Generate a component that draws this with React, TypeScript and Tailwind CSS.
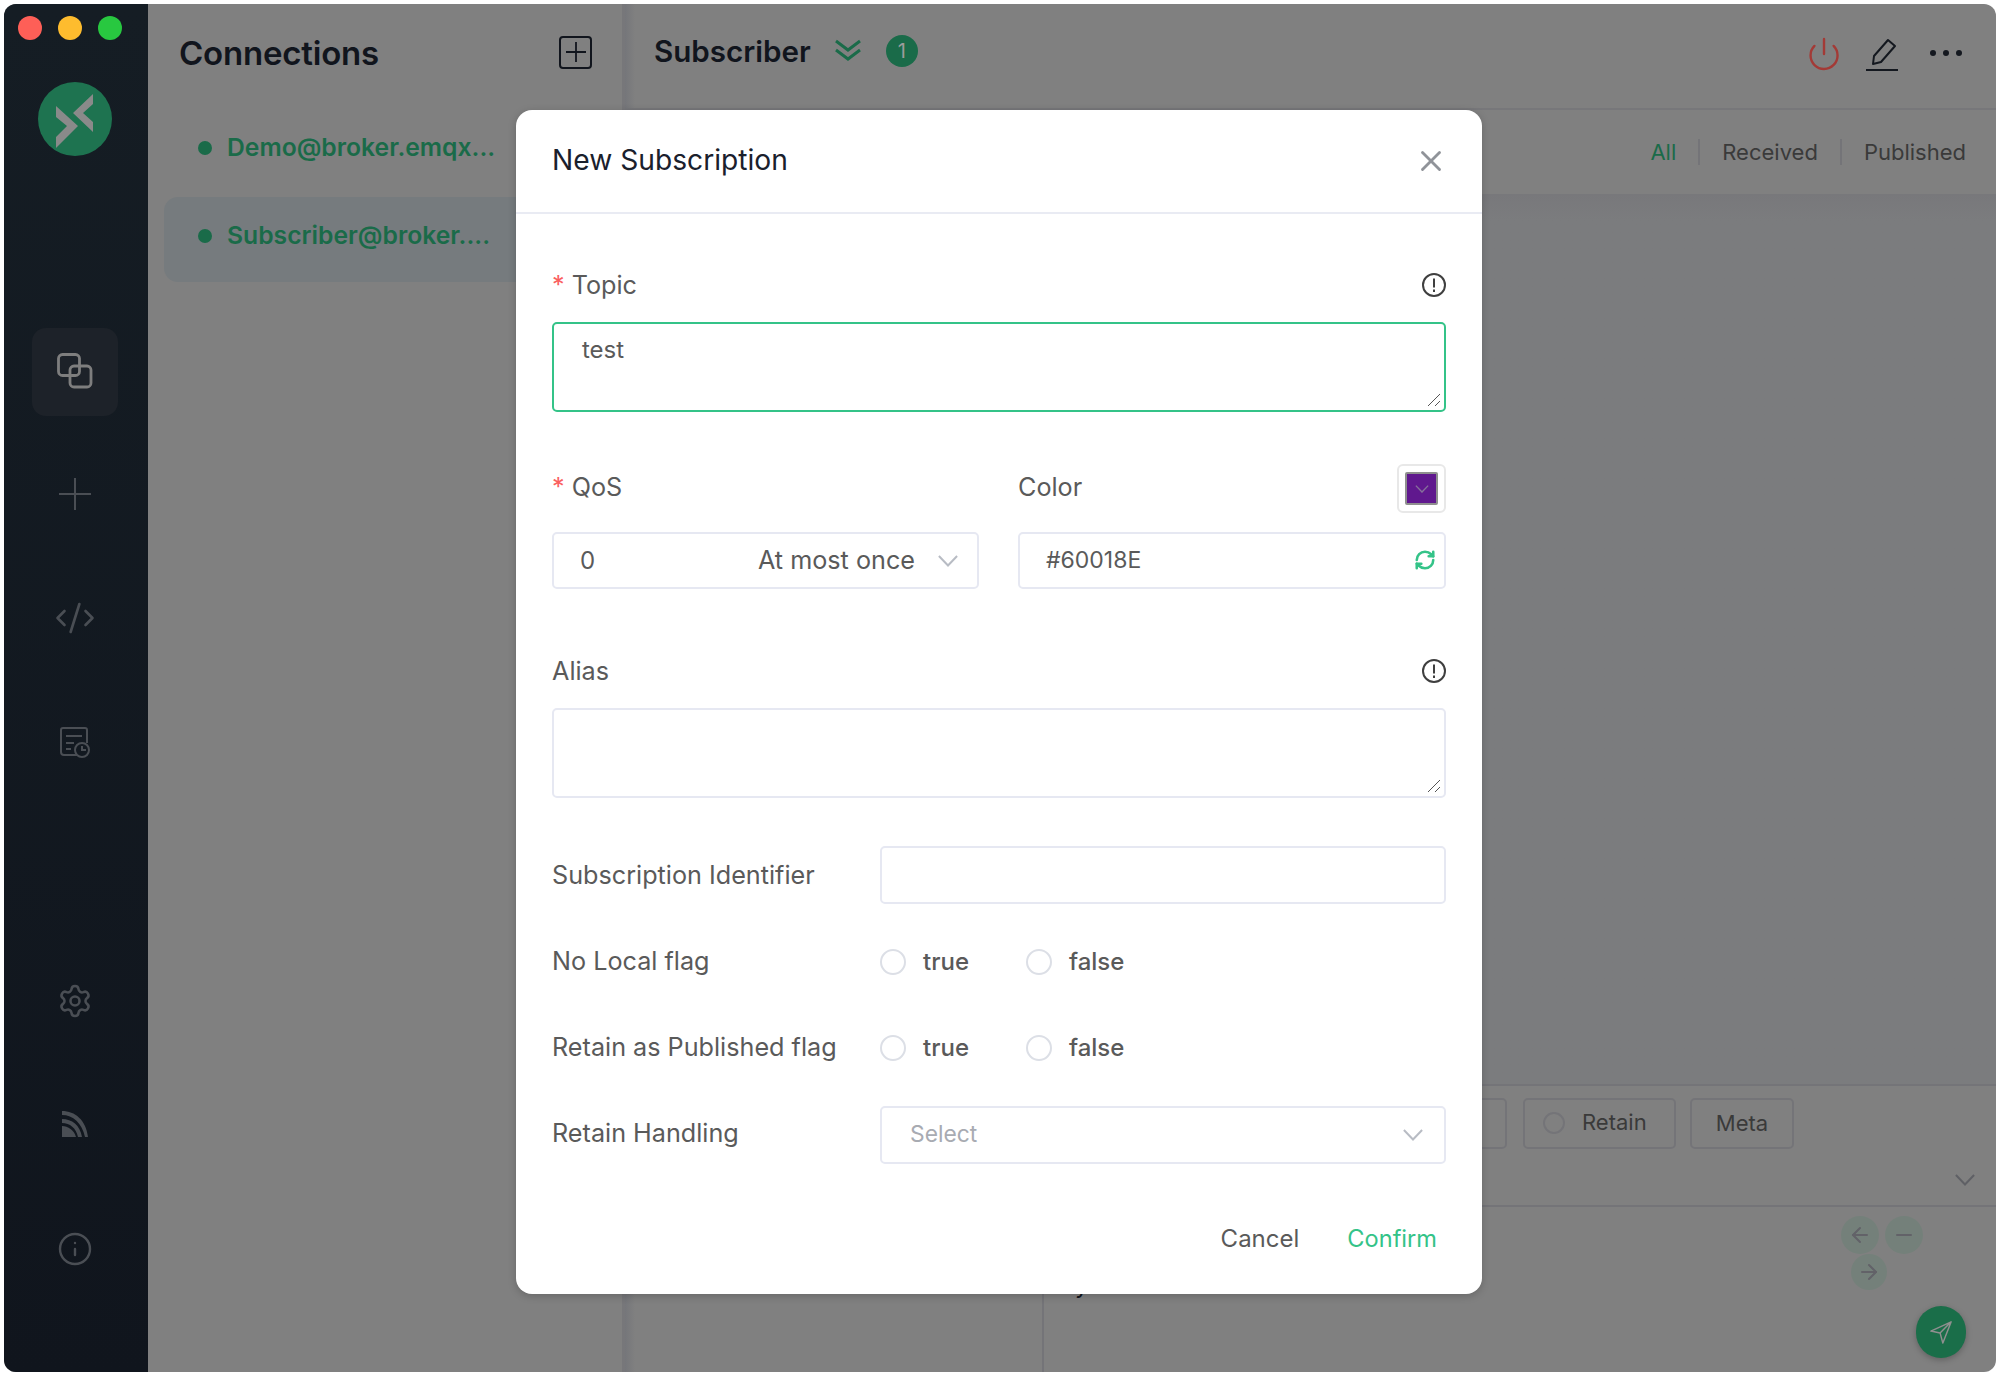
import { X, RefreshCw, Power, ArrowLeft, ArrowRight, Minus, Settings, Info, CodeXml } from "lucide-react";

const font = "font-['Inter','Liberation_Sans',sans-serif]";

function Grip() {
  return (
    <svg viewBox="0 0 14 14" className="absolute right-[3px] bottom-[3px] h-[14px] w-[14px] text-[#555555]" fill="none" stroke="currentColor" strokeWidth="1">
      <path d="M1 13 L13 1 M8 13 L13 8" />
    </svg>
  );
}

function Alert() {
  return (
    <svg viewBox="0 0 24 24" className="h-[24px] w-[24px] text-[#3f3f3f]" fill="none" stroke="currentColor" strokeWidth="2">
      <circle cx="12" cy="12" r="11" />
      <path d="M12 5.5v9M12 16.5v2.5" />
    </svg>
  );
}

function Chev({ className }: { className: string }) {
  return (
    <svg viewBox="0 0 22 13" className={className} fill="none" stroke="currentColor" strokeWidth="2.2">
      <path d="M1 1 L11 11.5 L21 1" />
    </svg>
  );
}

function Radio({ label }: { label: string }) {
  return (
    <div className="flex items-center">
      <span className="h-[26px] w-[26px] rounded-full border-2 border-[#dcdfe6]" />
      <span className="ml-[17px] text-[24px] font-medium text-[#5a5a5a]">{label}</span>
    </div>
  );
}

function Logo() {
  return (
    <svg viewBox="0 0 74 74" className="h-[74px] w-[74px]">
      <circle cx="37" cy="37" r="37" fill="#1e7350" />
      <path d="M55 12 L35 31 L55 50 L55 40 L45 31 L55 22 Z" fill="#8a8a8a" />
      <path d="M18 24 L40 44 L18 66 L18 55 L29 44 L18 35 Z" fill="#8a8a8a" />
    </svg>
  );
}

function ConnIcon() {
  return (
    <svg viewBox="0 0 36 36" className="h-[36px] w-[36px]" fill="none" stroke="#7e7e7e" strokeWidth="2.8">
      <rect x="1.5" y="1.5" width="21" height="21" rx="4" />
      <rect x="13" y="13" width="21" height="21" rx="4" />
    </svg>
  );
}

function NavPlus() {
  return (
    <svg viewBox="0 0 32 32" className="h-[32px] w-[32px]" fill="none" stroke="#4a4e54" strokeWidth="2">
      <path d="M16 0 V32 M0 16 H32" />
    </svg>
  );
}

function ScriptIcon() {
  return (
    <svg viewBox="0 0 32 32" className="h-[32px] w-[32px]" fill="none" stroke="#4a4e54" strokeWidth="2">
      <path d="M18 29 H5 a3 3 0 0 1 -3 -3 V4 a2 2 0 0 1 2 -2 H26 a2 2 0 0 1 2 2 V17" />
      <path d="M7 10 H23 M7 17 H15 M7 23 H12" />
      <circle cx="23" cy="24" r="7" />
      <path d="M23 20 V24 H27" />
    </svg>
  );
}

function FeedIcon() {
  return (
    <svg viewBox="0 0 30 30" className="h-[30px] w-[30px]" fill="#4a4e54">
      <path d="M2 2 C15 2 26 11 28 28 H25 C22 14 13 6 2 6 Z" />
      <path d="M2 10 C12 10 20 16 22 28 H18 C16 19 10 14 2 14 Z" />
      <path d="M2 17 C8 17 14 21 16 28 H2 Z" />
    </svg>
  );
}

function EditIcon() {
  return (
    <svg viewBox="0 0 32 34" className="h-[34px] w-[32px]" fill="none" stroke="#14181f" strokeWidth="2">
      <path d="M7 26 L8 18 L22 2 L29 8 L15 24 Z" strokeLinejoin="round" />
      <path d="M0 32 H32" />
    </svg>
  );
}

function DoubleChev() {
  return (
    <svg viewBox="0 0 26 23" className="h-[23px] w-[26px]" fill="none" stroke="#1a6b49" strokeWidth="3">
      <path d="M1 2 L13 11 L25 2 M1 11 L13 20 L25 11" />
    </svg>
  );
}

function Plane() {
  return (
    <svg viewBox="0 0 26 26" className="h-[24px] w-[24px]" fill="none" stroke="#8f8f8f" strokeWidth="1.6">
      <path d="M24 2 L2 12 L12 14 L15 25 Z M24 2 L12 14" strokeLinejoin="round" />
    </svg>
  );
}

export default function App() {
  return (
    <div className={`${font} h-[1376px] w-[2000px] overflow-hidden bg-white p-[4px]`}>
      <div className="relative flex h-[1368px] w-[1992px] overflow-hidden rounded-[12px] bg-[#808080]">
        {/* left nav */}
        <div className="flex w-[144px] shrink-0 flex-col items-center bg-gradient-to-b from-[#151d24] to-[#10151d] pr-[2px] pt-[12px]">
          <div className="flex w-full gap-[16px] pl-[14px]">
            <span className="h-[24px] w-[24px] rounded-full bg-[#fe5f57]" />
            <span className="h-[24px] w-[24px] rounded-full bg-[#febc2e]" />
            <span className="h-[24px] w-[24px] rounded-full bg-[#28c840]" />
          </div>
          <div className="mt-[42px]"><Logo /></div>
          <div className="mt-[172px] flex h-[88px] w-[86px] items-center justify-center rounded-[14px] bg-[#1d2229] pb-[2px]"><ConnIcon /></div>
          <div className="mt-[62px]"><NavPlus /></div>
          <CodeXml className="mt-[87px] h-[42px] w-[42px] text-[#4a4e54]" strokeWidth={1.5} />
          <div className="mt-[87px]"><ScriptIcon /></div>
          <Settings className="mt-[225px] h-[36px] w-[36px] text-[#4a4e54]" strokeWidth={1.7} />
          <div className="mt-[90px]"><FeedIcon /></div>
          <Info className="mt-[92px] h-[36px] w-[36px] text-[#4a4e54]" strokeWidth={1.6} />
        </div>

        {/* connection list */}
        <div className="w-[477px] shrink-0 border-r-[3px] border-[#77777a] pl-[31px]">
          <div className="flex h-[102px] items-center justify-between pr-[30px] pb-[2px]">
            <span className="text-[33px] font-semibold tracking-[-0.2px] text-[#11151d]">Connections</span>
            <span className="mb-[4px] flex h-[33px] w-[33px] items-center justify-center rounded-[4px] border-2 border-[#11151d]">
              <svg viewBox="0 0 20 20" className="h-[20px] w-[20px]" fill="none" stroke="#11151d" strokeWidth="1.8"><path d="M10 0 V20 M0 10 H20" /></svg>
            </span>
          </div>
          <div className="-ml-[15px] flex h-[91px] items-center gap-[15px] pb-[8px] pl-[34px]">
            <span className="h-[14px] w-[14px] rounded-full bg-[#1a6b49]" />
            <span className="text-[24.7px] font-semibold text-[#1a6b49]">Demo@broker.emqx...</span>
          </div>
          <div className="-ml-[15px] flex h-[85px] items-center gap-[15px] rounded-[14px] bg-[#767b7e] pb-[8px] pl-[34px]">
            <span className="h-[14px] w-[14px] rounded-full bg-[#1a6b49]" />
            <span className="text-[24.7px] font-semibold text-[#1a6b49]">Subscriber@broker....</span>
          </div>
        </div>

        {/* main */}
        <div className="relative flex min-w-0 flex-1 flex-col">
          <span className="absolute left-0 top-0 h-full w-[10px] bg-gradient-to-r from-[#75767a] to-transparent" />
          <div className="flex h-[106px] items-center border-b-2 border-[#77777a] pl-[29px] pr-[30px]">
            <div className="flex items-center pb-[10px]">
              <span className="text-[29.6px] font-semibold text-[#11151d]">Subscriber</span>
              <span className="ml-[24px]"><DoubleChev /></span>
              <span className="ml-[25px] flex h-[32px] w-[32px] items-center justify-center rounded-full bg-[#1a6b49] text-[20px] text-[#9c9c9c]">1</span>
            </div>
            <Power className="mb-[4px] ml-auto h-[36px] w-[36px] text-[#a33a36]" strokeWidth={1.6} />
            <div className="mb-[2px] ml-[24px]"><EditIcon /></div>
            <div className="ml-[32px] mr-[4px] flex gap-[7px] pb-[6px]">
              <span className="h-[6px] w-[6px] rounded-full bg-[#14181f]" />
              <span className="h-[6px] w-[6px] rounded-full bg-[#14181f]" />
              <span className="h-[6px] w-[6px] rounded-full bg-[#14181f]" />
            </div>
          </div>
          <div className="flex h-[84px] items-center justify-end pr-[30px] text-[22px] text-[#3a3a3a]">
            <span className="text-[#1a6b49]">All</span>
            <span className="mx-[22px] h-[26px] w-[2px] bg-[#747478]" />
            <span>Received</span>
            <span className="mx-[22px] h-[26px] w-[2px] bg-[#747478]" />
            <span>Published</span>
          </div>
          <div className="h-[892px] bg-gradient-to-b from-[#78787b] to-[#7b7c7e] to-[3%] border-b-2 border-[#747478]" />
          <div className="relative flex h-[121px] items-start justify-end border-b-2 border-[#747478] pr-[202px] pt-[12px] text-[22px] text-[#3a3a3a]">
            <div className="mr-[16px] h-[51px] w-[60px] rounded-[5px] border-2 border-[#747478]" />
            <div className="flex h-[51px] w-[153px] items-center rounded-[5px] border-2 border-[#747478] pb-[2px] pl-[18px]">
              <span className="h-[22px] w-[22px] rounded-full border-2 border-[#747478]" />
              <span className="ml-[17px]">Retain</span>
            </div>
            <div className="ml-[14px] flex h-[51px] w-[104px] items-center justify-center rounded-[5px] border-2 border-[#747478]">Meta</div>
            <Chev className="absolute right-[21px] top-[88px] h-[12px] w-[20px] text-[#5f6065]" />
          </div>
          <div className="relative flex-1">
            <span className="absolute left-[417px] top-0 h-full w-[2px] bg-[#747478]" />
            <span className="absolute left-[450px] top-[60px] text-[24px] text-[#11151d]">y</span>
            <div className="absolute right-[117px] top-[9px] flex h-[38px] w-[38px] items-center justify-center rounded-full bg-[#74807a]"><ArrowLeft className="h-[24px] w-[24px] text-[#626268]" /></div>
            <div className="absolute right-[73px] top-[9px] flex h-[38px] w-[38px] items-center justify-center rounded-full bg-[#74807a]"><Minus className="h-[24px] w-[24px] text-[#626268]" /></div>
            <div className="absolute right-[109px] top-[47px] flex h-[36px] w-[36px] items-center justify-center rounded-full bg-[#74807a]"><ArrowRight className="h-[24px] w-[24px] text-[#626268]" /></div>
            <div className="absolute right-[30px] top-[99px] flex h-[52px] w-[50px] items-center justify-center rounded-full bg-[#1a6e49] shadow-[0_2px_6px_rgba(0,0,0,0.25)]"><Plane /></div>
          </div>
        </div>

        {/* dialog */}
        <div className="absolute left-[512px] top-[106px] w-[966px] rounded-[16px] bg-white shadow-[0_2px_8px_rgba(0,0,0,0.2)]">
          <div className="flex h-[104px] items-center justify-between border-b-2 border-[#e9ebf3] pl-[36px] pr-[34px]">
            <span className="pb-[2px] text-[28.2px] text-[#1a202c]">New Subscription</span>
            <X className="h-[34px] w-[34px] text-[#909399]" strokeWidth={2} />
          </div>
          <div className="flex flex-col px-[36px] text-[25.2px] text-[#5a5a5a]">
            <div className="mt-[53px] flex h-[36px] items-center justify-between">
              <span className="pt-[2px]"><span className="text-[#fa5f5f]">*</span> Topic</span>
              <Alert />
            </div>
            <div className="relative mt-[19px] h-[90px] rounded-[5px] border-2 border-[#34c388] pl-[28px] pt-[8px] text-[24px]">
              test
              <Grip />
            </div>
            <div className="mt-[52px] grid h-[49px] grid-cols-[427px_428px] gap-x-[39px]">
              <div className="flex items-center pb-[2px]"><span><span className="text-[#fa5f5f]">*</span> QoS</span></div>
              <div className="flex items-center justify-between">
                <span className="pb-[2px]">Color</span>
                <span className="flex h-[49px] w-[49px] items-center justify-center rounded-[6px] border-2 border-[#e8e8e8]">
                  <span className="flex h-[33px] w-[33px] items-center justify-center rounded-[2px] border-2 border-[#8f8f8f] bg-[#60188e]">
                    <Chev className="h-[8px] w-[14px] text-[#86719a]" />
                  </span>
                </span>
              </div>
            </div>
            <div className="mt-[19px] grid h-[57px] grid-cols-[427px_428px] gap-x-[39px]">
              <div className="flex items-center rounded-[5px] border-2 border-[#e6e8f2] pl-[26px] pr-[19px]">
                <span className="text-[24px]">0</span>
                <span className="ml-auto">At most once</span>
                <Chev className="ml-[23px] h-[12px] w-[20px] text-[#b8bcc4]" />
              </div>
              <div className="flex items-center justify-between rounded-[5px] border-2 border-[#e6e8f2] pl-[26px] pr-[8px]">
                <span className="text-[23px]">#60018E</span>
                <RefreshCw className="mb-[2px] h-[22px] w-[22px] text-[#34c388]" strokeWidth={2.8} />
              </div>
            </div>
            <div className="mt-[64px] flex h-[36px] items-center justify-between">
              <span className="pt-[2px]">Alias</span>
              <Alert />
            </div>
            <div className="relative mt-[19px] h-[90px] rounded-[5px] border-2 border-[#e6e8f2]"><Grip /></div>
            <div className="mt-[48px] flex h-[58px] items-center">
              <span className="w-[328px] pt-[2px]">Subscription Identifier</span>
              <span className="h-full flex-1 rounded-[5px] border-2 border-[#e6e8f2]" />
            </div>
            <div className="mt-[30px] flex h-[56px] items-center">
              <span className="w-[328px]">No Local flag</span>
              <div className="flex gap-[57px]"><Radio label="true" /><Radio label="false" /></div>
            </div>
            <div className="mt-[30px] flex h-[56px] items-center">
              <span className="w-[328px]">Retain as Published flag</span>
              <div className="flex gap-[57px]"><Radio label="true" /><Radio label="false" /></div>
            </div>
            <div className="mt-[30px] flex h-[58px] items-center">
              <span className="w-[328px] pb-[2px]">Retain Handling</span>
              <div className="flex h-full flex-1 items-center justify-between rounded-[5px] border-2 border-[#e6e8f2] pl-[28px] pr-[21px]">
                <span className="pb-[1px] text-[22.8px] text-[#a8abb2]">Select</span>
                <Chev className="h-[12px] w-[20px] text-[#b8bcc4]" />
              </div>
            </div>
            <div className="mt-[52px] flex h-[48px] items-center justify-end gap-[48px] pb-[2px] pr-[9px] text-[24px]">
              <span>Cancel</span>
              <span className="text-[23.6px] text-[#34c388]">Confirm</span>
            </div>
            <div className="h-[30px]" />
          </div>
        </div>
      </div>
    </div>
  );
}
